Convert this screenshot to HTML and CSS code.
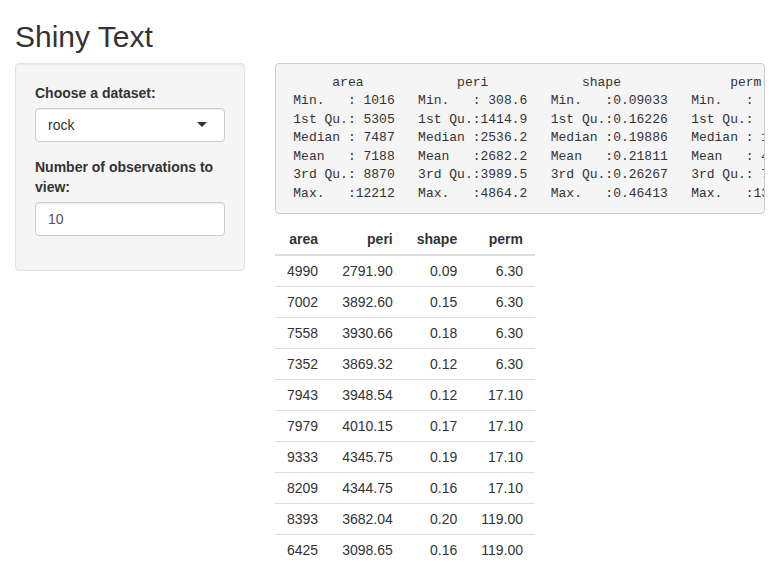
FILE: index.html
```html
<!DOCTYPE html>
<html>
<head>
<meta charset="utf-8">
<title>Shiny Text</title>
<link rel="stylesheet" href="styles.css">
</head>
<body>
<div class="container-fluid">
  <h2 class="title">Shiny Text</h2>
  <div class="row">
    <div class="col-side">
      <form class="well">
        <div class="form-group">
          <label class="control-label">Choose a dataset:</label>
          <div class="selectize-input">
            <span class="item">rock</span>
            <span class="caret"></span>
          </div>
        </div>
        <div class="form-group">
          <label class="control-label">Number of observations to view:</label>
          <input class="form-control" type="number" value="10">
        </div>
      </form>
    </div>
    <div class="col-main">
<pre class="shiny-text-output">      area            peri            shape              perm        
 Min.   : 1016   Min.   : 308.6   Min.   :0.09033   Min.   :   6.30  
 1st Qu.: 5305   1st Qu.:1414.9   1st Qu.:0.16226   1st Qu.:  76.45  
 Median : 7487   Median :2536.2   Median :0.19886   Median : 130.50  
 Mean   : 7188   Mean   :2682.2   Mean   :0.21811   Mean   : 415.45  
 3rd Qu.: 8870   3rd Qu.:3989.5   3rd Qu.:0.26267   3rd Qu.: 777.50  
 Max.   :12212   Max.   :4864.2   Max.   :0.46413   Max.   :1300.00  </pre>
      <table class="shiny-table">
        <thead>
          <tr><th>area</th><th>peri</th><th>shape</th><th>perm</th></tr>
        </thead>
        <tbody>
          <tr><td>4990</td><td>2791.90</td><td>0.09</td><td>6.30</td></tr>
          <tr><td>7002</td><td>3892.60</td><td>0.15</td><td>6.30</td></tr>
          <tr><td>7558</td><td>3930.66</td><td>0.18</td><td>6.30</td></tr>
          <tr><td>7352</td><td>3869.32</td><td>0.12</td><td>6.30</td></tr>
          <tr><td>7943</td><td>3948.54</td><td>0.12</td><td>17.10</td></tr>
          <tr><td>7979</td><td>4010.15</td><td>0.17</td><td>17.10</td></tr>
          <tr><td>9333</td><td>4345.75</td><td>0.19</td><td>17.10</td></tr>
          <tr><td>8209</td><td>4344.75</td><td>0.16</td><td>17.10</td></tr>
          <tr><td>8393</td><td>3682.04</td><td>0.20</td><td>119.00</td></tr>
          <tr><td>6425</td><td>3098.65</td><td>0.16</td><td>119.00</td></tr>
        </tbody>
      </table>
    </div>
  </div>
</div>
</body>
</html>
```
FILE: styles.css
```css
* { box-sizing: border-box; }
html, body { margin: 0; padding: 0; }
body {
  font-family: "Liberation Sans", Arial, sans-serif;
  font-size: 14px;
  line-height: 1.42857143;
  color: #333;
  background: #fff;
}
.container-fluid { padding: 0 15px; }
.title {
  font-size: 30px;
  font-weight: 500;
  line-height: 1.1;
  margin: 20px 0 10px;
}
.row { display: flex; margin: 0 -15px; }
.col-side { width: 33.3333%; padding: 0 15px; }
.col-main { width: 66.6667%; padding: 0 15px; min-width: 0; }
.well {
  min-height: 20px;
  padding: 19px;
  margin: 0 0 20px;
  background: #f5f5f5;
  border: 1px solid #e3e3e3;
  border-radius: 4px;
  box-shadow: inset 0 1px 1px rgba(0,0,0,.05);
}
.form-group { margin-bottom: 15px; }
.control-label {
  display: block;
  font-weight: 700;
  margin-bottom: 5px;
}
.selectize-input {
  position: relative;
  height: 34px;
  padding: 6px 12px;
  background: #fff;
  border: 1px solid #ccc;
  border-radius: 4px;
  box-shadow: inset 0 1px 1px rgba(0,0,0,.075);
}
.selectize-input .item { line-height: 20px; }
.caret {
  position: absolute;
  right: 17px;
  top: 50%;
  margin-top: -3px;
  width: 0; height: 0;
  border-style: solid;
  border-width: 5px 5px 0 5px;
  border-color: #333 transparent transparent transparent;
}
.form-control {
  display: block;
  width: 100%;
  height: 34px;
  padding: 6px 12px;
  font-family: inherit;
  font-size: 14px;
  line-height: 1.42857143;
  color: #555;
  background: #fff;
  border: 1px solid #ccc;
  border-radius: 4px;
  box-shadow: inset 0 1px 1px rgba(0,0,0,.075);
  -moz-appearance: textfield;
}
.form-control::-webkit-inner-spin-button,
.form-control::-webkit-outer-spin-button { -webkit-appearance: none; margin: 0; }
.shiny-text-output {
  display: block;
  margin: 0 0 10px;
  padding: 9.5px;
  font-family: "Liberation Mono", "Courier New", monospace;
  font-size: 13px;
  line-height: 1.42857143;
  color: #333;
  background: #f5f5f5;
  border: 1px solid #ccc;
  border-radius: 4px;
  white-space: pre;
  overflow: hidden;
}
.shiny-table {
  border-collapse: collapse;
  border-spacing: 0;
  margin-bottom: 20px;
}
.shiny-table th,
.shiny-table td {
  padding: 5px 12px;
  line-height: 1.42857143;
  text-align: right;
}
.shiny-table th {
  font-weight: 700;
  vertical-align: bottom;
  border-bottom: 2px solid #ddd;
}
.shiny-table td { border-top: 1px solid #ddd; }
```
